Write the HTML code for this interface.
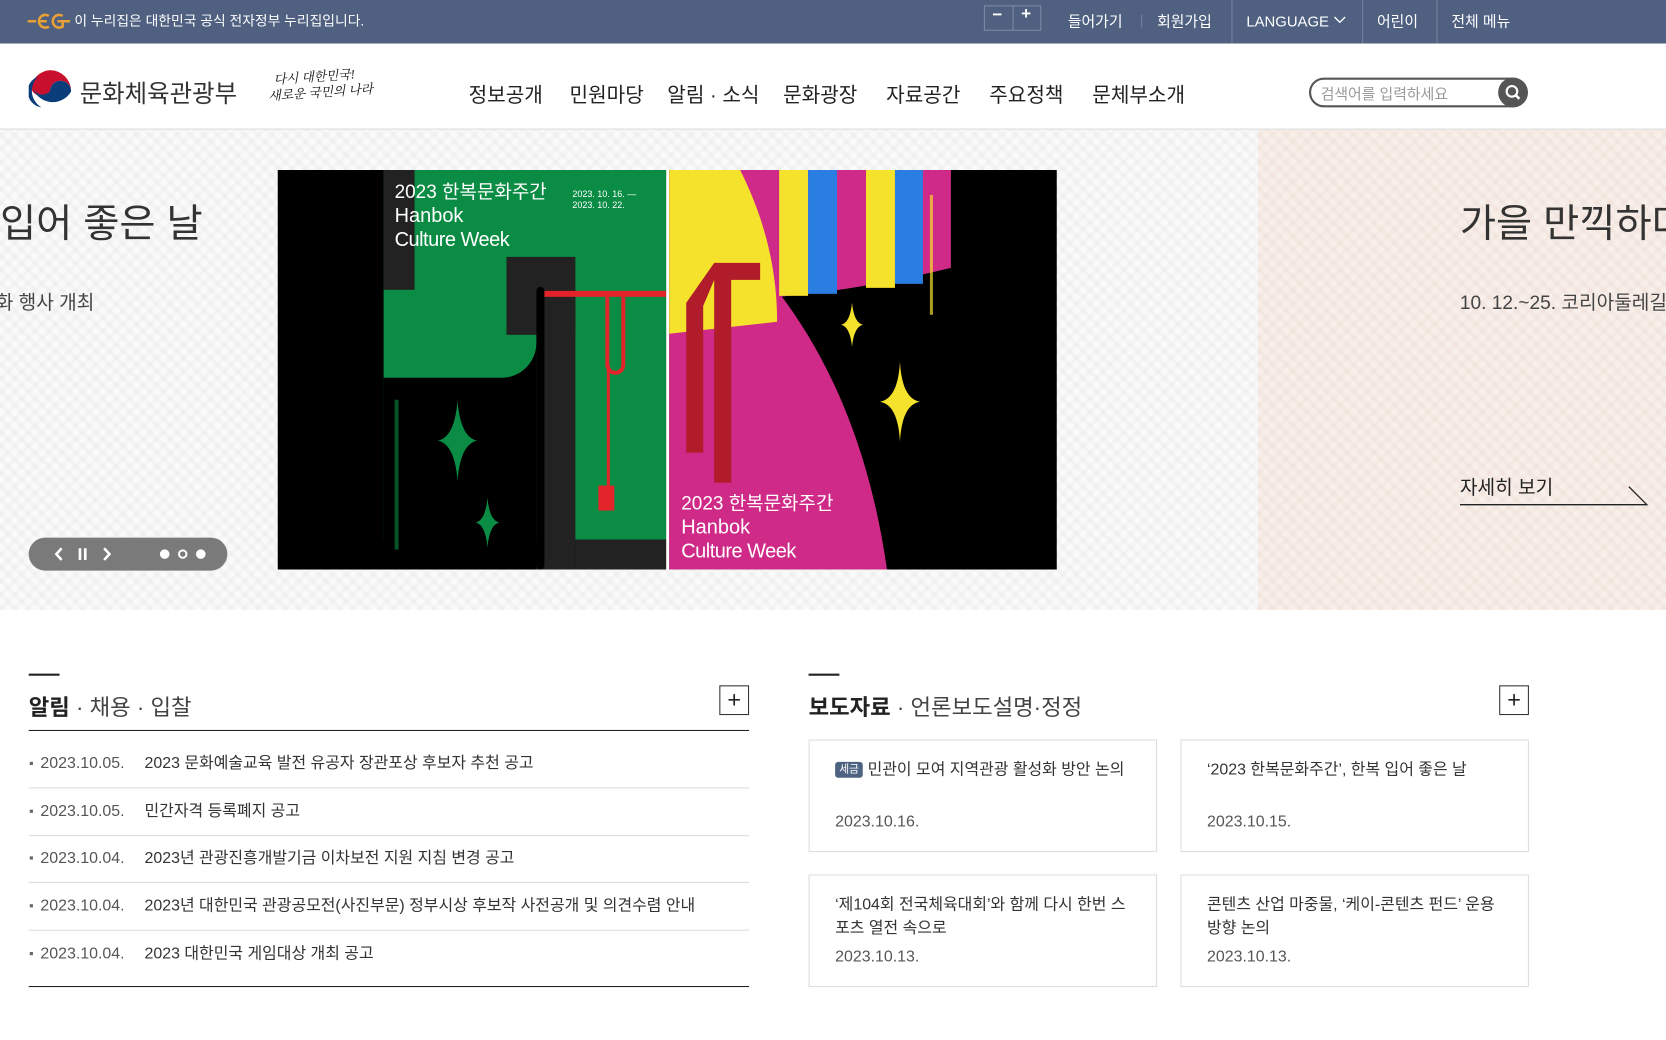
<!DOCTYPE html>
<html><head><meta charset="utf-8">
<style>
html,body{margin:0;padding:0;width:1666px;height:1040px;overflow:hidden;background:#fff}
*{box-sizing:border-box}
.page{position:absolute;left:0;top:0;width:1568px;height:979px;transform:scale(1.0625);transform-origin:0 0;font-family:"Liberation Sans","Noto Sans CJK KR",sans-serif;color:#333}
.a{position:absolute;white-space:nowrap}
.top{position:absolute;left:0;top:0;width:1568px;height:41px;background:#4f6080;color:#fff;font-size:14px}
.top .a{top:10px;line-height:20px}
.vd{position:absolute;top:0;width:1px;height:41px;background:#7383a0}
.hdr{position:absolute;left:0;top:41px;width:1568px;height:81px;border-bottom:1px solid #d9d9d9;background:#fff}
.nav{position:absolute;top:34px;font-size:19px;color:#222}
.banner{position:absolute;left:0;top:122px;width:1568px;height:452px;background:#fafafa;
background-image:repeating-linear-gradient(45deg,rgba(0,0,0,0.025) 0 4px,transparent 4px 9px),repeating-linear-gradient(-45deg,rgba(0,0,0,0.02) 0 4px,transparent 4px 9px);overflow:hidden}
.peach{position:absolute;left:1184px;top:0;width:384px;height:452px;background:#f8efea;
background-image:repeating-linear-gradient(45deg,rgba(180,120,90,0.05) 0 4px,transparent 4px 9px),repeating-linear-gradient(-45deg,rgba(180,120,90,0.04) 0 4px,transparent 4px 9px)}
.sec-h{position:absolute;font-size:21px;color:#222}
.plus{position:absolute;width:28px;height:28px;border:1px solid #333;text-align:center;line-height:25px;font-size:22px;color:#222}
.row{position:absolute;left:27px;width:678px;height:45px;border-bottom:1px solid #ddd;font-size:15px}
.row .b{position:absolute;left:1px;top:20px;width:3px;height:3px;background:#666}
.row .d{position:absolute;left:11px;top:12px;line-height:20px;color:#555}
.row .t{position:absolute;left:109px;top:12px;line-height:20px;color:#333}
.card{position:absolute;width:328px;height:106px;border:1px solid #ddd;font-size:15px;background:#fff}
.card .t{position:absolute;left:24px;top:17px;width:285px;line-height:22px;color:#333}
.card .d{position:absolute;left:24px;top:67px;line-height:20px;color:#555}
</style></head><body>
<div class="page">
  <div class="top">
    <svg class="a" style="left:26px;top:11px" width="40" height="18" viewBox="0 0 40 18"><g fill="none" stroke="#e9a136" stroke-width="2.4"><path d="M0,9 H8"/><path d="M20,4 A6,6 0 1 0 20,14"/><path d="M12,9 H18"/><path d="M33,4 A6,6 0 1 0 33,14 V9 H28"/><path d="M33,9 H40"/></g></svg>
    <div class="a" style="left:70px;font-size:13px">이 누리집은 대한민국 공식 전자정부 누리집입니다.</div>
    <div class="a" style="left:926px;top:5px;width:54px;height:24px;border:1px solid #7d8aa5"></div>
    <div class="a" style="left:953px;top:5px;width:1px;height:24px;background:#7d8aa5"></div>
    <div class="a" style="left:934px;top:5px;font-size:16px;font-weight:bold">−</div>
    <div class="a" style="left:961px;top:4px;font-size:16px;font-weight:bold">+</div>
    <div class="a" style="left:1005px">들어가기</div>
    <div class="a" style="left:1074px;top:14px;width:1px;height:12px;background:#7383a0"></div>
    <div class="a" style="left:1089px">회원가입</div>
    <div class="vd" style="left:1159px"></div>
    <div class="a" style="left:1173px">LANGUAGE</div>
    <svg class="a" style="left:1255px;top:15px" width="12" height="8" viewBox="0 0 12 8"><path d="M1,1 L6,6 L11,1" fill="none" stroke="#fff" stroke-width="1.3"/></svg>
    <div class="vd" style="left:1282px"></div>
    <div class="a" style="left:1296px">어린이</div>
    <div class="vd" style="left:1352px"></div>
    <div class="a" style="left:1366px">전체 메뉴</div>
  </div>

  <div class="hdr">
    <svg class="a" style="left:27px;top:25px" width="40" height="40" viewBox="0 0 40 40">
      <circle cx="20" cy="20" r="20" fill="#fff"/>
      <path d="M20,0 A20,20 0 0 1 40,20 A10,10 0 0 0 20,20 A10,10 0 0 1 2,16 A20,20 0 0 1 20,0Z" fill="#c8102e"/>
      <path d="M3,14 A10,10 0 0 0 20,20 A10,10 0 0 1 40,20 A20,20 0 0 1 3,14Z" fill="#0b3d7a"/>
      <path d="M9,6 A18,18 0 0 0 12,35 A15,15 0 0 1 9,6Z" fill="#0b3d7a"/>
    </svg>
    <div class="a" style="left:75px;top:28px;font-size:23px;color:#333">문화체육관광부</div>
    <div class="a" style="left:252px;top:24px;font-size:12px;line-height:15px;font-style:italic;font-family:'Liberation Serif','Noto Serif CJK SC',serif;color:#111;transform:rotate(-4deg)">&nbsp;&nbsp;다시 대한민국!<br>새로운 국민의 나라</div>
    <div class="nav" style="left:441px">정보공개</div>
    <div class="nav" style="left:536px">민원마당</div>
    <div class="nav" style="left:628px">알림 · 소식</div>
    <div class="nav" style="left:737px">문화광장</div>
    <div class="nav" style="left:834px">자료공간</div>
    <div class="nav" style="left:931px">주요정책</div>
    <div class="nav" style="left:1028px">문체부소개</div>
    <div class="a" style="left:1232px;top:32px;width:206px;height:28px;border:2px solid #555;border-radius:14px;background:#fff"></div>
    <div class="a" style="left:1243px;top:37px;font-size:14px;color:#999">검색어를 입력하세요</div>
    <div class="a" style="left:1410px;top:32px;width:28px;height:28px;border-radius:14px;background:#555"></div>
    <svg class="a" style="left:1415px;top:37px" width="18" height="18" viewBox="0 0 18 18"><circle cx="8" cy="8" r="5" fill="none" stroke="#fff" stroke-width="2"/><path d="M11.5,11.5 L15,15" stroke="#fff" stroke-width="2.4"/></svg>
  </div>

  <div class="banner">
    <div class="peach"></div>
    <div class="a" style="left:0;top:58px;font-size:37px;color:#333">입어 좋은 날</div>
    <div class="a" style="left:-4px;top:149px;font-size:18px;color:#444">화 행사 개최</div>
    <div class="a" style="left:27px;top:384px;width:187px;height:31px;border-radius:16px;background:#7a7a7a"></div>
    <svg class="a" style="left:27px;top:384px" width="187" height="31" viewBox="0 0 187 31">
      <path d="M31,10 L26,15.5 L31,21" fill="none" stroke="#fff" stroke-width="2.4"/>
      <rect x="47" y="10" width="2.5" height="11" fill="#fff"/><rect x="52" y="10" width="2.5" height="11" fill="#fff"/>
      <path d="M71,10 L76,15.5 L71,21" fill="none" stroke="#fff" stroke-width="2.4"/>
      <circle cx="128" cy="15.5" r="4.5" fill="#fff"/><circle cx="145" cy="15.5" r="3.5" fill="none" stroke="#fff" stroke-width="1.8"/><circle cx="162" cy="15.5" r="4.5" fill="#fff"/>
    </svg>
    <div class="a" style="left:1374px;top:58px;font-size:37px;color:#333">가을 만끽하다</div>
    <div class="a" style="left:1374px;top:149px;font-size:18px;color:#444">10. 12.~25. 코리아둘레길</div>
    <div class="a" style="left:1374px;top:323px;font-size:18px;color:#222">자세히 보기</div>
    <svg class="a" style="left:1374px;top:330px" width="180" height="25" viewBox="0 0 180 25"><path d="M0,23 H176 L159,6" fill="none" stroke="#222" stroke-width="1.2"/></svg>
  </div>

  <svg class="a" style="left:261px;top:160px" width="734" height="376" viewBox="277 170 780 400">
    <rect x="277" y="170" width="389" height="400" fill="#000"/>
    <rect x="383" y="170" width="283" height="370" fill="#0b8c45"/>
    <rect x="383" y="170" width="31" height="120" fill="#222"/>
    <path d="M383,378 H501 A35,35 0 0 0 536,343 V570 H383Z" fill="#000"/>
    <rect x="506" y="257" width="69" height="78" fill="#222"/>
    <rect x="536" y="290" width="39" height="280" fill="#222"/>
    <rect x="575" y="540" width="91" height="30" fill="#222"/>
    <rect x="536" y="287" width="8" height="283" rx="4" fill="#000"/>
    <rect x="544" y="291" width="122" height="6" fill="#e2232a"/>
    <path d="M607,297 V365 A8,8 0 0 0 623,365 V297" fill="none" stroke="#e2232a" stroke-width="4"/>
    <path d="M608,365 V488" stroke="#e2232a" stroke-width="3"/>
    <rect x="598" y="486" width="16" height="25" fill="#e2232a"/>
    <path d="M457,401 Q460,438 477,441 Q460,444 457,481 Q454,444 437,441 Q454,438 457,401Z" fill="#0b8c45"/>
    <path d="M487,498 Q489,521 499,523 Q489,525 487,548 Q485,525 475,523 Q485,521 487,498Z" fill="#0b8c45"/>
    <text x="394" y="198" font-size="19" fill="#fff" font-family="Liberation Sans,Noto Sans CJK KR,sans-serif">2023 한복문화주간</text>
    <text x="394" y="222" font-size="20" fill="#fff" font-family="Liberation Sans,sans-serif">Hanbok</text>
    <text x="394" y="246" font-size="20" fill="#fff" font-family="Liberation Sans,sans-serif" letter-spacing="-0.5">Culture Week</text>
    <text x="572" y="197" font-size="9" fill="#fff" font-family="Liberation Sans,sans-serif">2023. 10. 16. —</text>
    <text x="572" y="208" font-size="9" fill="#fff" font-family="Liberation Sans,sans-serif">2023. 10. 22.</text>
    <rect x="394" y="400" width="4" height="150" fill="#0b8c45" opacity="0.6"/>

    <rect x="666" y="170" width="3" height="400" fill="#fff"/>
    <rect x="669" y="170" width="388" height="400" fill="#000"/>
    <path d="M669,170 H779 V293 C830,360 870,450 887,570 H669Z" fill="#d02a88"/>
    <path d="M669,170 H740 C765,220 777,270 777,322 L669,334Z" fill="#f5e22c"/>
    <path d="M779,170 H951 V268 Q860,290 779,297Z" fill="#d02a88"/>
    <rect x="779" y="170" width="29" height="126" fill="#f5e22c"/>
    <rect x="808" y="170" width="29" height="124" fill="#2a7de1"/>
    <rect x="866" y="170" width="29" height="118" fill="#f5e22c"/>
    <rect x="895" y="170" width="28" height="114" fill="#2a7de1"/>
    <path d="M686,453 V303 L714,263 H760 V280 H731 V483 H714 V280 L703,306 V453Z" fill="#b01c2a"/>
    <path d="M852,303 Q854,323 863,325 Q854,327 852,347 Q850,327 841,325 Q850,323 852,303Z" fill="#f5e22c"/>
    <path d="M900,362 Q902,399 920,402 Q902,405 900,442 Q898,405 880,402 Q898,399 900,362Z" fill="#f5e22c"/>
    <rect x="930" y="195" width="3" height="120" fill="#f5e22c" opacity="0.7"/>
    <text x="681" y="510" font-size="19" fill="#fff" font-family="Liberation Sans,Noto Sans CJK KR,sans-serif">2023 한복문화주간</text>
    <text x="681" y="534" font-size="20" fill="#fff" font-family="Liberation Sans,sans-serif">Hanbok</text>
    <text x="681" y="558" font-size="20" fill="#fff" font-family="Liberation Sans,sans-serif" letter-spacing="-0.5">Culture Week</text>
  </svg>

  <!-- left section -->
  <div class="a" style="left:27px;top:634px;width:29px;height:2px;background:#222"></div>
  <div class="sec-h a" style="left:27px;top:650px"><span style="font-weight:bold">알림</span> <span style="color:#444">· 채용 · 입찰</span></div>
  <div class="plus" style="left:677px;top:645px">+</div>
  <div class="a" style="left:27px;top:687px;width:678px;height:1px;background:#222"></div>
  <div class="row" style="top:697px"><div class="b"></div><div class="d">2023.10.05.</div><div class="t">2023 문화예술교육 발전 유공자 장관포상 후보자 추천 공고</div></div>
  <div class="row" style="top:742px"><div class="b"></div><div class="d">2023.10.05.</div><div class="t">민간자격 등록폐지 공고</div></div>
  <div class="row" style="top:786px"><div class="b"></div><div class="d">2023.10.04.</div><div class="t">2023년 관광진흥개발기금 이차보전 지원 지침 변경 공고</div></div>
  <div class="row" style="top:831px"><div class="b"></div><div class="d">2023.10.04.</div><div class="t">2023년 대한민국 관광공모전(사진부문) 정부시상 후보작 사전공개 및 의견수렴 안내</div></div>
  <div class="row" style="top:876px;border-bottom:none"><div class="b"></div><div class="d">2023.10.04.</div><div class="t">2023 대한민국 게임대상 개최 공고</div></div>
  <div class="a" style="left:27px;top:928px;width:678px;height:1px;background:#222"></div>

  <!-- right section -->
  <div class="a" style="left:761px;top:634px;width:29px;height:2px;background:#222"></div>
  <div class="sec-h a" style="left:761px;top:650px"><span style="font-weight:bold">보도자료</span> <span style="color:#444">· 언론보도설명·정정</span></div>
  <div class="plus" style="left:1411px;top:645px">+</div>
  <div class="card" style="left:761px;top:696px"><div class="t"><span style="display:inline-block;background:#4e6281;color:#fff;font-size:10px;line-height:15px;padding:0 4px;border-radius:3px;vertical-align:2px">세금</span> 민관이 모여 지역관광 활성화 방안 논의</div><div class="d">2023.10.16.</div></div>
  <div class="card" style="left:1111px;top:696px"><div class="t">‘2023 한복문화주간’, 한복 입어 좋은 날</div><div class="d">2023.10.15.</div></div>
  <div class="card" style="left:761px;top:823px"><div class="t">‘제104회 전국체육대회’와 함께 다시 한번 스포츠 열전 속으로</div><div class="d">2023.10.13.</div></div>
  <div class="card" style="left:1111px;top:823px"><div class="t">콘텐츠 산업 마중물, ‘케이-콘텐츠 펀드’ 운용 방향 논의</div><div class="d">2023.10.13.</div></div>
</div>
</body></html>
